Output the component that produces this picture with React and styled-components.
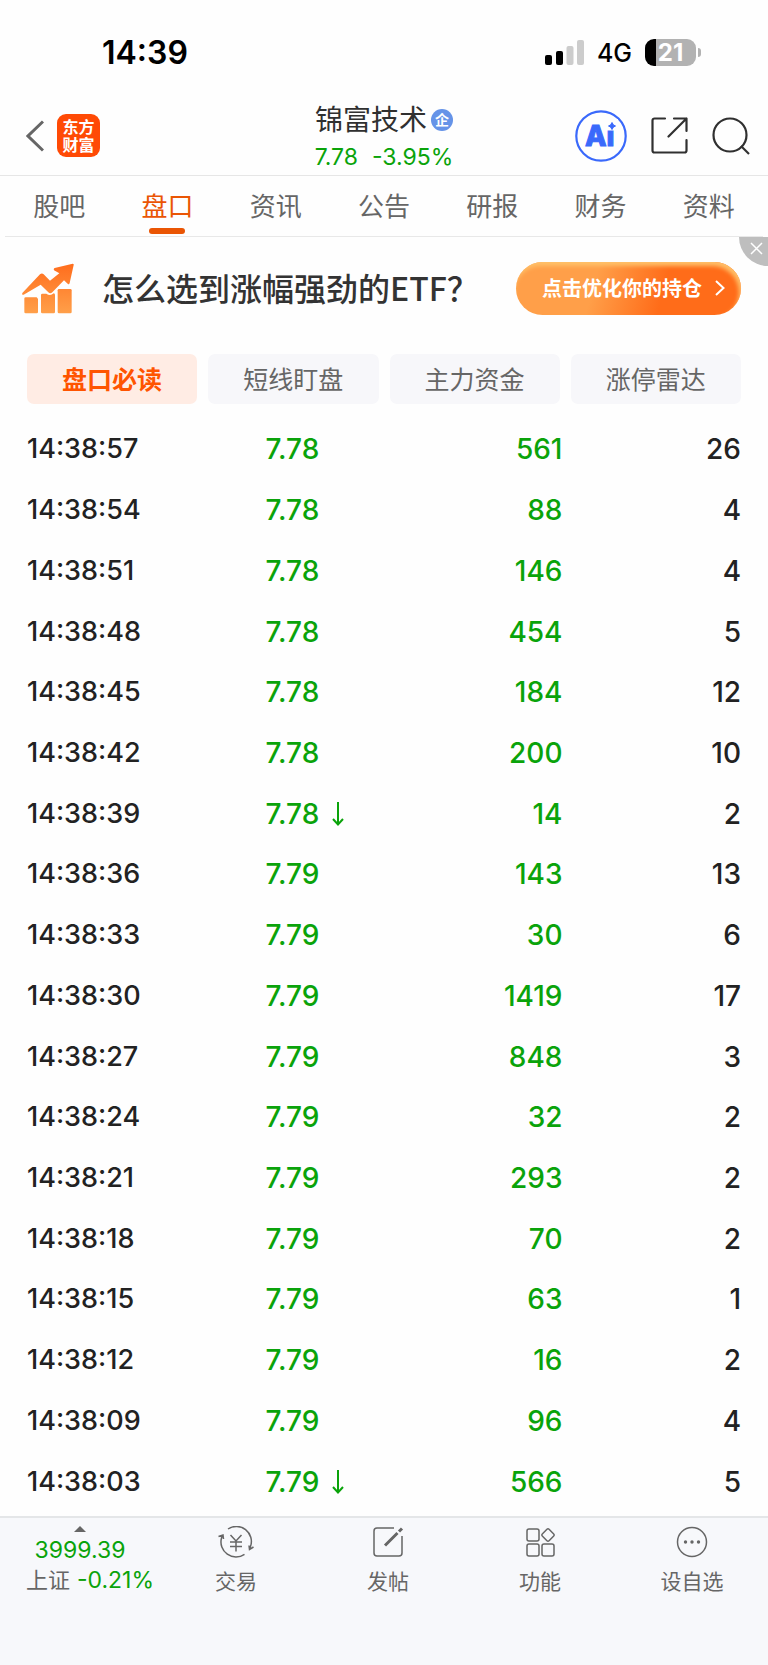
import React from "react";
import styled, { createGlobalStyle } from "styled-components";

const GlobalStyle = createGlobalStyle`
  * { box-sizing: border-box; }
  body {
    margin: 0;
    background: #fefefe;
    color: #222;
    font-family: Inter, "Noto Sans CJK SC", sans-serif;
  }
  button { font: inherit; color: inherit; background: none; border: 0; padding: 0; cursor: pointer; }
  a { color: inherit; text-decoration: none; }
  svg { display: block; }
`;

const GREEN = "#0aa30a";

const Page = styled.div`
  min-height: 100vh;
  display: flex;
  flex-direction: column;
`;

const StatusBar = styled.div`
  height: 96px;
  padding: 8px 72px 0 102px;
  display: flex;
  align-items: center;
  justify-content: space-between;
  color: #000;
`;

const Clock = styled.time`
  font-size: 32px;
  font-weight: 600;
`;

const StatusIcons = styled.div`
  display: flex;
  align-items: center;
  gap: 13px;
`;

const Network = styled.span`
  font-size: 25px;
  line-height: 32px;
  padding-top: 2px;
  font-weight: 500;
`;

const Battery = styled.div`
  position: relative;
  width: 51px;
  height: 27px;
  border-radius: 9px;
  background: linear-gradient(90deg, #000 11px, #b2b2b2 11px);
  color: #fff;
  font-size: 24px;
  line-height: 27px;
  font-weight: 700;
  text-align: center;
  &::after {
    content: "";
    position: absolute;
    left: 53px;
    top: 9px;
    width: 3px;
    height: 9px;
    border-radius: 0 4px 4px 0;
    background: #b2b2b2;
  }
`;

const Header = styled.header`
  height: 80px;
  padding: 0 18px;
  display: grid;
  grid-template-columns: minmax(0, 1fr) auto minmax(0, 1fr);
  align-items: center;
  border-bottom: 1px solid #e6e6e6;
`;

const HeaderLeft = styled.div`
  padding-left: 8px;
  display: flex;
  align-items: center;
  gap: 13px;
`;

const Logo = styled.a`
  width: 43px;
  height: 43px;
  border-radius: 9px;
  background: #ff4a05;
  color: #fff;
  font-size: 16px;
  line-height: 18px;
  font-weight: 700;
  display: grid;
  place-content: center;
  text-align: center;
`;

const StockTitle = styled.div`
  padding-top: 5px;
  display: flex;
  flex-direction: column;
  align-items: center;
`;

const StockName = styled.h1`
  margin: 0;
  display: flex;
  align-items: center;
  gap: 4px;
  font-size: 28px;
  line-height: 38px;
  font-weight: 400;
  color: #303030;
`;

const Badge = styled.span`
  width: 22px;
  height: 22px;
  border-radius: 50%;
  background: #6593e8;
  color: #fff;
  font-size: 14px;
  line-height: 21px;
  font-weight: 700;
  text-align: center;
`;

const Quote = styled.div`
  display: flex;
  gap: 14px;
  font-size: 23px;
  line-height: 36px;
  color: ${GREEN};
`;

const HeaderActions = styled.div`
  display: flex;
  align-items: center;
  justify-content: flex-end;
  gap: 24px;
`;

const Tabs = styled.nav`
  margin: 0 5px;
  height: 61px;
  display: flex;
  border-bottom: 1px solid #e8e8e8;
`;

const Tab = styled.a`
  flex: 1;
  position: relative;
  text-align: center;
  font-size: 26px;
  line-height: 62px;
  color: ${(p) => (p.$active ? "#ea5504" : "#666")};
  &::after {
    content: "";
    display: ${(p) => (p.$active ? "block" : "none")};
    position: absolute;
    left: calc(50% - 18px);
    bottom: 2px;
    width: 36px;
    height: 6px;
    border-radius: 3px;
    background: #ea5504;
  }
`;

const Banner = styled.section`
  position: relative;
  padding: 25px 27px 0 22px;
  display: flex;
  align-items: center;
`;

const BannerText = styled.p`
  margin: 0 0 0 28px;
  padding-bottom: 4px;
  flex: 1;
  white-space: nowrap;
  font-family: "Noto Sans CJK SC", sans-serif;
  font-size: 32px;
  line-height: 48px;
  font-weight: 500;
  color: #333;
`;

const BannerButton = styled.button`
  width: 225px;
  height: 53px;
  border-radius: 27px;
  background: linear-gradient(105deg, #ff9f49 35%, #ff6c19 65%);
  box-shadow: inset -2px 4px 4px #ffc069;
  display: flex;
  align-items: center;
  justify-content: center;
  gap: 13px;
  && {
    padding: 0 0 2px 10px;
    color: #fff;
    font-size: 20px;
    font-weight: 700;
  }
`;

const CloseButton = styled.button`
  position: absolute;
  top: 0;
  right: 0;
  width: 29px;
  height: 29px;
  display: flex;
  align-items: flex-start;
  && {
    background: #bebebe;
    border-bottom-left-radius: 100%;
    padding: 5px 0 0 11px;
  }
`;

const Chips = styled.div`
  margin: 39px 27px 15px;
  display: flex;
  gap: 11px;
`;

const Chip = styled.button`
  flex: 1;
  height: 50px;
  && {
    border-radius: 7px;
    background: ${(p) => (p.$active ? "#ffece4" : "#f7f7fa")};
    color: ${(p) => (p.$active ? "#ff5400" : "#666")};
    padding-bottom: 2px;
    font-size: 25px;
    font-weight: ${(p) => (p.$active ? 700 : 400)};
  }
`;

const TradesArea = styled.main`
  flex: 1;
  display: grid;
  padding: 0 27px 4px;
`;

const Trades = styled.table`
  width: 100%;
  height: 100%;
  table-layout: fixed;
  border-collapse: collapse;
  font-size: 28px;
  line-height: 36px;
  font-weight: 500;
`;

const Col = styled.col`
  width: ${(p) => p.$width};
`;

const Cell = styled.td`
  padding: 0;
  text-align: ${(p) => (p.$right ? "right" : "left")};
  color: ${(p) => (p.$green ? GREEN : "#222")};
`;

const TimeCell = styled(Cell)`
  font-size: 27px;
`;

const Price = styled.span`
  padding-left: 3px;
  display: flex;
  align-items: center;
  gap: 13px;
`;

const Footer = styled.footer`
  height: 149px;
  padding-top: 8px;
  display: flex;
  align-items: flex-start;
  background: #f7f8fb;
  border-top: 2px solid #e4e6e8;
  color: #666;
  font-size: 21px;
  line-height: 32px;
`;

const IndexQuote = styled.a`
  flex: 0 0 160px;
  display: flex;
  flex-direction: column;
  align-items: center;
`;

const IndexLine = styled.span`
  align-self: flex-end;
  padding-right: 6px;
  display: flex;
  gap: 7px;
  align-items: center;
  font-size: 22px;
  white-space: nowrap;
`;

const IndexNumber = styled.span`
  font-size: 23px;
  color: ${GREEN};
`;

const IndexValue = styled(IndexNumber)`
  padding-top: 4px;
  line-height: 28px;
`;

const FooterItem = styled.button`
  flex: 1;
  display: flex;
  flex-direction: column;
  align-items: center;
  gap: 8px;
`;

const TABS = ["股吧", "盘口", "资讯", "公告", "研报", "财务", "资料"];
const CHIPS = ["盘口必读", "短线盯盘", "主力资金", "涨停雷达"];

const TRADES = [
  ["14:38:57", "7.78", 561, 26],
  ["14:38:54", "7.78", 88, 4],
  ["14:38:51", "7.78", 146, 4],
  ["14:38:48", "7.78", 454, 5],
  ["14:38:45", "7.78", 184, 12],
  ["14:38:42", "7.78", 200, 10],
  ["14:38:39", "7.78", 14, 2, true],
  ["14:38:36", "7.79", 143, 13],
  ["14:38:33", "7.79", 30, 6],
  ["14:38:30", "7.79", 1419, 17],
  ["14:38:27", "7.79", 848, 3],
  ["14:38:24", "7.79", 32, 2],
  ["14:38:21", "7.79", 293, 2],
  ["14:38:18", "7.79", 70, 2],
  ["14:38:15", "7.79", 63, 1],
  ["14:38:12", "7.79", 16, 2],
  ["14:38:09", "7.79", 96, 4],
  ["14:38:03", "7.79", 566, 5, true],
];

const SignalIcon = () => (
  <svg width="39" height="25" viewBox="0 0 39 25">
    <rect x="0" y="15" width="7" height="10" rx="2" fill="#000" />
    <rect x="11" y="11" width="7" height="14" rx="2" fill="#000" />
    <rect x="21.500" y="6" width="7" height="19" rx="2" fill="#ccc" />
    <rect x="32" y="0" width="7" height="25" rx="2" fill="#ccc" />
  </svg>
);

const BackIcon = () => (
  <svg width="18" height="32" viewBox="0 0 18 32" fill="none" stroke="#666" strokeWidth="3">
    <path d="M17 1.500 2 16l15 14.500" />
  </svg>
);

const AiIcon = () => (
  <svg width="52" height="52" viewBox="0 0 52 52">
    <circle cx="26" cy="26" r="24.700" fill="none" stroke="#3a69fb" strokeWidth="2.200" />
    <text x="10" y="36" fontFamily="Inter, sans-serif" fontSize="28" fontWeight="800" fill="#3a69fb" stroke="#3a69fb">
      Ai
    </text>
    <path d="M31 9h12v11.500H31z" fill="#fefefe" />
    <path d="M37 12.500q1 3 3.500 3.500-2.500.5-3.500 3.500-1-3-3.500-3.500 2.500-.5 3.500-3.500z" fill="#3a69fb" stroke="#3a69fb" />
  </svg>
);

const ShareIcon = () => (
  <svg width="37" height="37" viewBox="0 0 37 37" fill="none" stroke="#303030" strokeWidth="2.200" strokeLinecap="round" strokeLinejoin="round">
    <path d="M14 1.500H3.500a2 2 0 0 0-2 2v30a2 2 0 0 0 2 2h30a2 2 0 0 0 2-2V23M23 1.500h12.500V14M35.500 1.500 17.500 19.500" />
  </svg>
);

const SearchIcon = () => (
  <svg width="38" height="38" viewBox="0 0 38 38" fill="none" stroke="#303030" strokeWidth="2.200">
    <circle cx="18" cy="18" r="16.500" />
    <path d="m29 29 8 8" />
  </svg>
);

const GrowthIcon = () => (
  <svg width="52" height="51" viewBox="67 279 156 153">
    <defs>
      <linearGradient id="growth" x1="0" y1="279" x2="0" y2="432" gradientUnits="userSpaceOnUse">
        <stop offset="0" stopColor="#ff6c1c" />
        <stop offset="1" stopColor="#ffa04a" />
      </linearGradient>
    </defs>
    <g fill="url(#growth)">
      <path d="M78 382h33l4 4v40q0 4-4 4H78q-4 0-4-4v-40q0-4 4-4z" />
      <path d="M128 371h12q12 8 22-1 4 0 4 5v51q0 4-4 4h-34q-4 0-4-4v-51q0-4 4-4z" />
      <rect x="174" y="357" width="42" height="73" rx="4" />
      <path d="M68 369 121 313q6-5 11 0l19 19 28-22-16-9q-2-5 2-7l54-13q4 0 3 4l-12 54q-2 6-6 2l-11-10-35 36q-6 6-12 0l-23-23-51 30q-6 2-4-5z" />
    </g>
  </svg>
);

const CloseIcon = () => (
  <svg width="13" height="13" viewBox="0 0 13 13" stroke="#fff" strokeWidth="1.500">
    <path d="m1 1 11 11M12 1 1 12" />
  </svg>
);

const ChevronIcon = () => (
  <svg width="10" height="16" viewBox="0 0 10 16" fill="none" stroke="#fff" strokeWidth="2">
    <path d="m1 1 7.500 7L1 15" />
  </svg>
);

const DownIcon = () => (
  <svg width="12" height="24" viewBox="0 0 12 24" fill="none" stroke={GREEN} strokeWidth="2">
    <path d="M6 0v22.500M1 17l5 5.500 5-5.500" />
  </svg>
);

const UpTriangle = () => (
  <svg width="12" height="6" viewBox="0 0 12 6" fill="#666">
    <path d="M6 0l6 6H0z" />
  </svg>
);

const iconProps = { fill: "none", stroke: "#666", strokeWidth: 1.5 };

const TradeIcon = () => (
  <svg width="36" height="32" viewBox="0 0 36 32" {...iconProps}>
    <path d="M10 3A15 15 0 0 1 32.500 20.500L31.500 23.500M26.500 28.300A15 15 0 0 1 3.500 12L4.500 9.500M.500 10.500l4.500-1.500.500 4M35.500 21l-4 2.500-.500-4" />
    <path d="m12.500 9 5.500 6 5.500-6M18 15V25.500M12 16h12M12 20.500h12" />
  </svg>
);

const PostIcon = () => (
  <svg width="32" height="32" viewBox="0 0 32 32" {...iconProps}>
    <path d="M22 2H5a3 3 0 0 0-3 3v22a3 3 0 0 0 3 3h22a3 3 0 0 0 3-3V10" />
    <path d="M13 19.500 25.500 7M27 5.500l3-3" strokeWidth="3" />
  </svg>
);

const FeatureIcon = () => (
  <svg width="32" height="32" viewBox="0 0 32 32" {...iconProps}>
    <rect x="3" y="3" width="12" height="12" rx="2" />
    <rect x="3" y="18" width="12" height="12" rx="2" />
    <rect x="18" y="18" width="12" height="12" rx="2" />
    <rect x="19.200" y="4.200" width="9.600" height="9.600" rx="1.500" transform="rotate(45 24 9)" />
  </svg>
);

const MoreIcon = () => (
  <svg width="32" height="32" viewBox="0 0 32 32" {...iconProps}>
    <circle cx="16" cy="16" r="14.500" />
    <g fill="#666" stroke="none">
      <circle cx="9.500" cy="16" r="1.700" />
      <circle cx="16" cy="16" r="1.700" />
      <circle cx="22.500" cy="16" r="1.700" />
    </g>
  </svg>
);

const FOOTER_ITEMS = [
  ["交易", TradeIcon],
  ["发帖", PostIcon],
  ["功能", FeatureIcon],
  ["设自选", MoreIcon],
];

export default function App() {
  return (
    <Page>
      <GlobalStyle />
      <StatusBar>
        <Clock>14:39</Clock>
        <StatusIcons>
          <SignalIcon />
          <Network>4G</Network>
          <Battery>21</Battery>
        </StatusIcons>
      </StatusBar>

      <Header>
        <HeaderLeft>
          <button aria-label="返回"><BackIcon /></button>
          <Logo href="#home">
            <span>东方</span>
            <span>财富</span>
          </Logo>
        </HeaderLeft>
        <StockTitle>
          <StockName>
            锦富技术
            <Badge>企</Badge>
          </StockName>
          <Quote>
            <span>7.78</span>
            <span>-3.95%</span>
          </Quote>
        </StockTitle>
        <HeaderActions>
          <button aria-label="AI"><AiIcon /></button>
          <button aria-label="分享"><ShareIcon /></button>
          <button aria-label="搜索"><SearchIcon /></button>
        </HeaderActions>
      </Header>

      <Tabs>
        {TABS.map((label) => (
          <Tab key={label} href={`#${label}`} $active={label === "盘口"}>{label}</Tab>
        ))}
      </Tabs>

      <Banner>
        <GrowthIcon />
        <BannerText>怎么选到涨幅强劲的ETF？</BannerText>
        <BannerButton>
          点击优化你的持仓
          <ChevronIcon />
        </BannerButton>
        <CloseButton aria-label="关闭"><CloseIcon /></CloseButton>
      </Banner>

      <Chips>
        {CHIPS.map((label, i) => (
          <Chip key={label} $active={i === 0}>{label}</Chip>
        ))}
      </Chips>

      <TradesArea>
        <Trades>
          <colgroup>
            <Col $width="33%" />
            <Col $width="22%" />
            <Col $width="20%" />
            <Col $width="25%" />
          </colgroup>
          <tbody>
            {TRADES.map(([time, price, volume, count, down]) => (
              <tr key={time}>
                <TimeCell>{time}</TimeCell>
                <Cell $green>
                  <Price>
                    {price}
                    {down && <DownIcon />}
                  </Price>
                </Cell>
                <Cell $green $right>{volume}</Cell>
                <Cell $right>{count}</Cell>
              </tr>
            ))}
          </tbody>
        </Trades>
      </TradesArea>

      <Footer>
        <IndexQuote href="#index">
          <UpTriangle />
          <IndexValue>3999.39</IndexValue>
          <IndexLine>
            上证
            <IndexNumber>-0.21%</IndexNumber>
          </IndexLine>
        </IndexQuote>
        {FOOTER_ITEMS.map(([label, Icon]) => (
          <FooterItem key={label}>
            <Icon />
            {label}
          </FooterItem>
        ))}
      </Footer>
    </Page>
  );
}
